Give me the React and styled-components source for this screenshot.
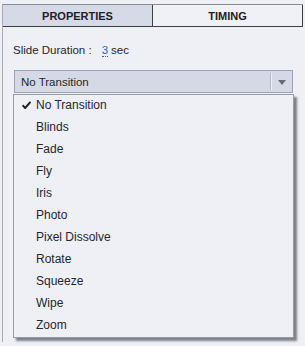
import React from "react";
import styled, { createGlobalStyle } from "styled-components";

const GlobalStyle = createGlobalStyle`
  html, body {
    margin: 0;
    padding: 0;
    background: #eff0f5;
    font-family: "Liberation Sans", Arial, sans-serif;
  }
`;

const Frame = styled.div`
  width: 303px;
  height: 346px;
  padding-top: 4px;
  box-sizing: border-box;
`;

const Panel = styled.div`
  height: 338px;
  margin-left: 2px;
  border-left: 1px solid #a9abb3;
  border-top: 1px solid #8a8c93;
  box-sizing: border-box;
`;

const TabBar = styled.div`
  display: flex;
  height: 21px;
  border-bottom: 1px solid #3c3e44;
`;

const Tab = styled.div`
  flex: 1;
  display: flex;
  align-items: center;
  justify-content: center;
  font-size: 11px;
  font-weight: bold;
  color: #1f2026;
  background: ${(p) => (p.active ? "#d5dae6" : "#f0f1f6")};
  border-right: 1px solid #3c3e44;
`;

const Body = styled.div`
  position: relative;
  padding: 15px 10px 0 10px;
`;

const DurationRow = styled.div`
  display: flex;
  align-items: center;
  font-size: 11.5px;
  color: #25262c;
  height: 16px;
  line-height: 14px;
`;

const Value = styled.span`
  margin-left: 10px;
  color: #2a5fbf;
  border-bottom: 1px dotted #2a5fbf;
  line-height: 12px;
`;

const Unit = styled.span`
  margin-left: 3px;
`;

const Select = styled.div`
  margin-top: 12px;
  margin-left: 1px;
  width: 279px;
  height: 23px;
  box-sizing: border-box;
  display: flex;
  align-items: center;
  background: #d4d9e5;
  border: 1px solid #9ca2b2;
  font-size: 11.5px;
  color: #25262c;
  padding-left: 6px;
`;

const SelectLabel = styled.span`
  flex: 1;
`;

const Divider = styled.span`
  width: 1px;
  height: 17px;
  background: #b6bbc7;
  border-right: 1px solid #eef0f5;
  margin-right: 6px;
`;

const Arrow = styled.span`
  width: 0;
  height: 0;
  border-left: 4px solid transparent;
  border-right: 4px solid transparent;
  border-top: 5px solid #656a78;
  margin-right: 6px;
  margin-top: 2px;
`;

const Menu = styled.ul`
  position: absolute;
  left: 10px;
  top: 67px;
  width: 281px;
  margin: 0;
  padding: 0;
  list-style: none;
  background: #eff0f6;
  border: 1px solid #979cab;
  box-shadow: 3px 3px 2px rgba(90, 92, 102, 0.75);
  box-sizing: border-box;
`;

const Item = styled.li`
  display: flex;
  align-items: center;
  height: 22px;
  padding-bottom: 3px;
  box-sizing: border-box;
  font-size: 12px;
  color: #25262c;
`;

const CheckSlot = styled.span`
  width: 20px;
  display: flex;
  justify-content: center;
  padding-left: 2px;
`;

const items = [
  "No Transition",
  "Blinds",
  "Fade",
  "Fly",
  "Iris",
  "Photo",
  "Pixel Dissolve",
  "Rotate",
  "Squeeze",
  "Wipe",
  "Zoom",
];

const Check = () => (
  <svg width="9" height="8" viewBox="0 0 9 8">
    <path d="M0.5 4.2 L3.2 7 L8.5 0.8" fill="none" stroke="#222" strokeWidth="2" />
  </svg>
);

const App = () => {
  const selected = "No Transition";
  return (
    <>
      <GlobalStyle />
      <Frame>
        <Panel>
          <TabBar>
            <Tab active>PROPERTIES</Tab>
            <Tab>TIMING</Tab>
          </TabBar>
          <Body>
            <DurationRow>
              Slide Duration :<Value>3</Value>
              <Unit>sec</Unit>
            </DurationRow>
            <Select>
              <SelectLabel>{selected}</SelectLabel>
              <Divider />
              <Arrow />
            </Select>
            <Menu>
              {items.map((name) => (
                <Item key={name}>
                  <CheckSlot>{name === selected && <Check />}</CheckSlot>
                  {name}
                </Item>
              ))}
            </Menu>
          </Body>
        </Panel>
      </Frame>
    </>
  );
};

export default App;
